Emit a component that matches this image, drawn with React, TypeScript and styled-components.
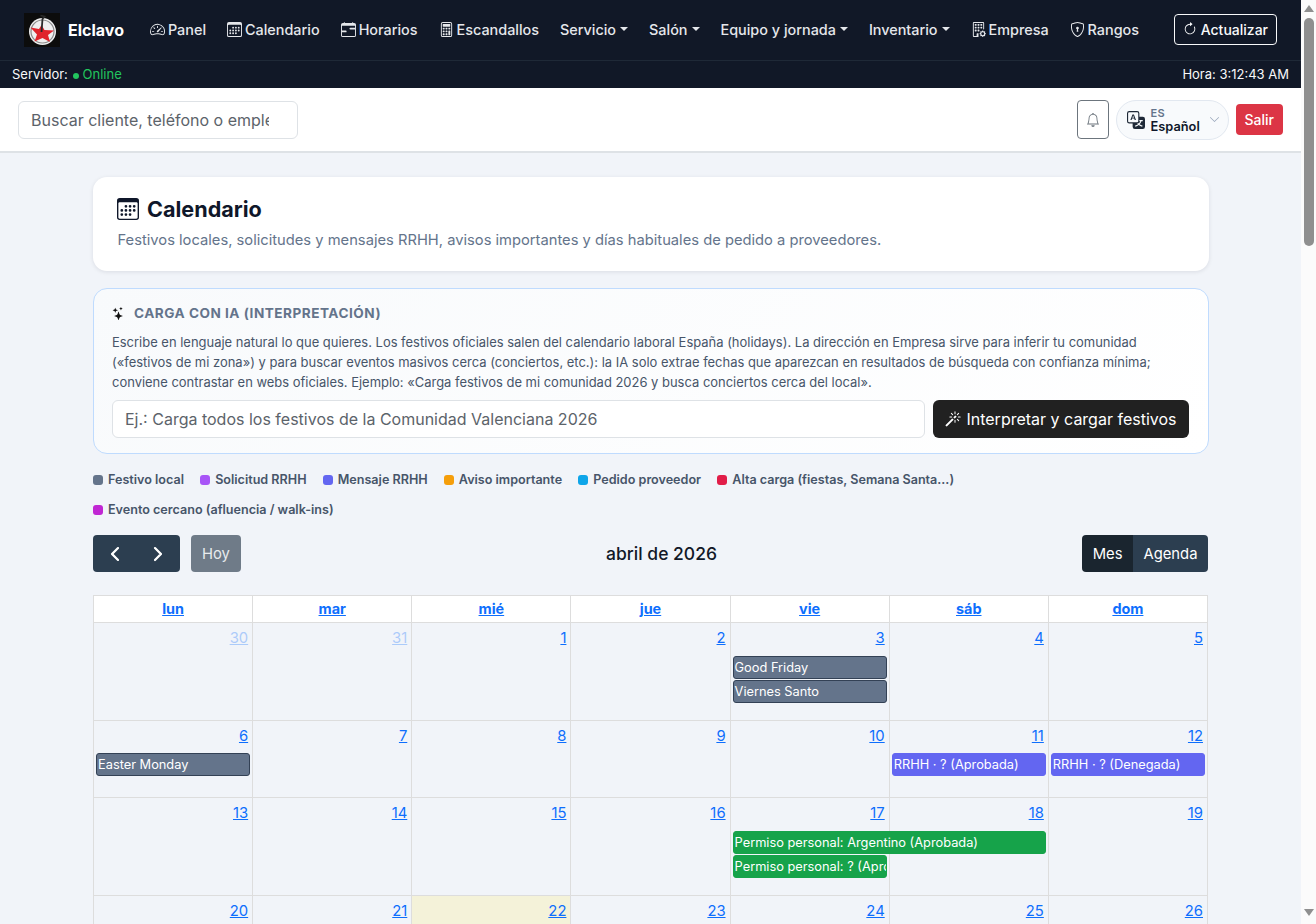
import styled, { createGlobalStyle } from 'styled-components';
import {
  BsArrowClockwise,
  BsBell,
  BsBuildingGear,
  BsCalculator,
  BsCalendar3,
  BsCalendarRange,
  BsChevronDown,
  BsChevronLeft,
  BsChevronRight,
  BsMagic,
  BsShieldLock,
  BsSpeedometer2,
  BsStars,
  BsTranslate,
} from 'react-icons/bs';

const GlobalStyle = createGlobalStyle`
  * { box-sizing: border-box; }
  html, body { margin: 0; padding: 0; }
  body {
    font-family: Inter, "Liberation Sans", sans-serif;
    background: #f1f4f9;
    color: #0f172a;
  }
`;

const Page = styled.div`
  width: 1301px;
`;

const ScrollRail = styled.div`
  position: fixed;
  top: 0;
  right: 0;
  bottom: 0;
  width: 15px;
  background: #fbfbfb;
  display: flex;
  flex-direction: column;
  align-items: center;
  justify-content: space-between;
  padding: 5px 0 8px;
`;

const ScrollTop = styled.div`
  display: flex;
  flex-direction: column;
  align-items: center;
  gap: 6px;
`;

const ScrollArrow = styled.span<{ $down?: boolean }>`
  width: 0;
  height: 0;
  border-left: 5px solid transparent;
  border-right: 5px solid transparent;
  border-bottom: ${(p) => (p.$down ? '0' : '7px solid #8f8f8f')};
  border-top: ${(p) => (p.$down ? '7px solid #8f8f8f' : '0')};
`;

const ScrollThumb = styled.div`
  width: 10px;
  height: 228px;
  border-radius: 5px;
  background: #8f8f8f;
`;

const Navbar = styled.nav`
  background: #111827;
  height: 61px;
  display: flex;
  align-items: center;
  padding: 0 24px;
  border-bottom: 1px solid #1f2937;
`;

const Brand = styled.a`
  display: flex;
  align-items: center;
  gap: 8px;
  color: #fff;
  font-size: 16px;
  font-weight: 700;
  text-decoration: none;
  margin-right: 26px;
`;

const NavLinks = styled.div`
  display: flex;
  align-items: center;
  gap: 21px;
  flex: 1;
  margin-bottom: 2px;
`;

const NavLink = styled.a`
  display: flex;
  align-items: center;
  gap: 3px;
  color: #e5e7eb;
  font-size: 14.4px;
  font-weight: 500;
  text-decoration: none;
  white-space: nowrap;
  svg { font-size: 15px; }
`;

const Caret = styled.span`
  width: 0;
  height: 0;
  margin-left: 1px;
  border-top: 4px solid #e5e7eb;
  border-left: 4px solid transparent;
  border-right: 4px solid transparent;
`;

const RefreshButton = styled.button`
  display: flex;
  align-items: center;
  gap: 4px;
  height: 31px;
  padding: 0 8px;
  margin-bottom: 2px;
  background: transparent;
  color: #f8f9fa;
  border: 1px solid #f8f9fa;
  border-radius: 4px;
  font: 500 14px Inter, sans-serif;
`;

const StatusBar = styled.div`
  height: 27px;
  padding: 0 12px 2px;
  background: #111827;
  color: #f8f9fa;
  display: flex;
  align-items: center;
  justify-content: space-between;
  font-size: 13px;
`;

const StatusOnline = styled.span`
  color: #22c55e;
`;

const StatusDot = styled.span`
  display: inline-block;
  width: 6px;
  height: 6px;
  margin: 0 4px 0 1px;
  border-radius: 50%;
  background: #22c55e;
`;

const SearchBar = styled.div`
  height: 65px;
  background: #fff;
  border-bottom: 2px solid #dee2e6;
  display: flex;
  align-items: center;
  justify-content: space-between;
  padding: 0 18px;
`;

const SearchInput = styled.input`
  width: 280px;
  height: 38px;
  padding: 0 28px 0 12px;
  border: 1px solid #dee2e6;
  border-radius: 6px;
  font: 400 16px Inter, sans-serif;
  &::placeholder { color: #5c636a; opacity: 1; }
`;

const SearchActions = styled.div`
  display: flex;
  align-items: center;
  gap: 7px;
`;

const BellButton = styled.button`
  width: 32px;
  height: 39px;
  padding: 0;
  background: #fff;
  border: 1px solid #6c757d;
  border-radius: 4px;
  color: #6c757d;
  display: flex;
  align-items: center;
  justify-content: center;
  font-size: 14px;
`;

const LanguagePill = styled.div`
  width: 113px;
  height: 40px;
  display: flex;
  align-items: center;
  padding: 0 8px 0 10px;
  gap: 6px;
  border: 1px solid #e2e8f0;
  border-radius: 20px;
  background: #f8fafc;
  color: #1f2937;
`;

const LanguageText = styled.div`
  display: flex;
  flex-direction: column;
  flex: 1;
  line-height: 13px;
`;

const LanguageCode = styled.span`
  font-size: 11px;
  font-weight: 600;
  letter-spacing: 0.4px;
  color: #64748b;
`;

const LanguageName = styled.span`
  font-size: 12.8px;
  font-weight: 600;
  color: #0f172a;
`;

const LogoutButton = styled.button`
  height: 31px;
  padding: 0 9px;
  border: 0;
  border-radius: 4px;
  background: #dc3545;
  color: #fff;
  font: 500 14px Inter, sans-serif;
`;

const Main = styled.main`
  width: 1116px;
  margin: 0 92px 0 93px;
  padding-top: 24px;
`;

const HeaderCard = styled.section`
  height: 94px;
  padding: 19px 24px 0;
  background: #fff;
  border-radius: 14px;
  box-shadow: 0 1px 4px rgba(15, 23, 42, 0.1);
`;

const Title = styled.h1`
  display: flex;
  align-items: center;
  gap: 8px;
  margin: 0 0 8px;
  font-size: 21.6px;
  line-height: 26px;
  font-weight: 700;
  color: #0f172a;
  svg { font-size: 22px; }
`;

const Subtitle = styled.p`
  margin: 0;
  padding-left: 0.5px;
  font-size: 14.72px;
  line-height: 21px;
  color: #64748b;
`;

const AiPanel = styled.section`
  height: 166px;
  margin-top: 17px;
  padding: 15px 19px 0 18px;
  border: 1px solid #bfdbfe;
  border-radius: 14px;
  background: linear-gradient(135deg, #f8fafc 0%, #ffffff 100%);
`;

const AiHeading = styled.h2`
  display: flex;
  align-items: center;
  gap: 9px;
  margin: 0 0 10px;
  font-size: 13.6px;
  line-height: 18px;
  font-weight: 700;
  letter-spacing: 0.5px;
  color: #64748b;
  svg { color: #111; font-size: 13px; }
`;

const AiText = styled.p`
  margin: 0 0 8px;
  font-size: 12.96px;
  line-height: 20px;
  color: #475569;
`;

const AiForm = styled.div`
  display: flex;
  gap: 8px;
`;

const AiInput = styled.input`
  flex: 1;
  height: 38px;
  padding: 0 12px;
  border: 1px solid #dee2e6;
  border-radius: 6px;
  font: 400 16px Inter, sans-serif;
  &::placeholder { color: #5c636a; opacity: 1; }
`;

const AiButton = styled.button`
  display: flex;
  align-items: center;
  gap: 5px;
  height: 38px;
  padding: 0 12.5px;
  border: 0;
  border-radius: 6px;
  background: #212121;
  color: #fff;
  font: 400 16px Inter, sans-serif;
`;

const Legend = styled.div`
  display: flex;
  flex-wrap: wrap;
  column-gap: 16.2px;
  row-gap: 12px;
  margin-top: 17px;
  padding-right: 8px;
`;

const LegendItem = styled.span`
  display: flex;
  align-items: center;
  gap: 5px;
  font-size: 12.58px;
  line-height: 18px;
  font-weight: 600;
  color: #475569;
`;

const LegendDot = styled.span<{ $color: string }>`
  width: 10px;
  height: 10px;
  border-radius: 3px;
  background: ${(p) => p.$color};
`;

const Toolbar = styled.div`
  display: flex;
  justify-content: space-between;
  align-items: center;
  height: 37px;
  margin: 16px 1px 23px 0;
`;

const ToolbarLeft = styled.div`
  display: flex;
  gap: 11px;
`;

const ToolbarTitle = styled.h2`
  margin: 0;
  font-size: 17.5px;
  font-weight: 500;
  color: #111827;
`;

const ButtonGroup = styled.div`
  display: flex;
  border-radius: 4px;
  overflow: hidden;
`;

const ToolButton = styled.button<{ $active?: boolean }>`
  height: 37px;
  padding: 0 10.5px;
  border: 0;
  background: ${(p) => (p.$active ? '#1a252f' : '#2c3e50')};
  color: #fff;
  font: 400 14.8px Inter, sans-serif;
  display: flex;
  align-items: center;
  justify-content: center;
`;

const ArrowButton = styled(ToolButton)`
  width: 43.5px;
  padding: 0;
  font-size: 16px;
  svg { stroke: currentColor; stroke-width: 1.2; }
`;

const TodayButton = styled.button`
  height: 37px;
  padding: 0 11px;
  border: 0;
  border-radius: 4px;
  background: #6f7b88;
  color: #e8ebee;
  font: 400 14.8px Inter, sans-serif;
`;

const Calendar = styled.div`
  margin-right: 1px;
  border-top: 1px solid #dddddd;
  border-left: 1px solid #dddddd;
`;

const HeaderRow = styled.div`
  display: grid;
  grid-template-columns: repeat(7, 1fr);
`;

const HeaderCell = styled.div`
  height: 27px;
  padding-bottom: 1px;
  background: #fff;
  border-right: 1px solid #ddd;
  border-bottom: 1px solid #ddd;
  display: flex;
  align-items: center;
  justify-content: center;
`;

const HeaderLink = styled.a`
  color: #0d6efd;
  font-size: 14.4px;
  font-weight: 700;
  text-decoration: underline;
`;

const Week = styled.div<{ $rows: string }>`
  display: grid;
  grid-template-columns: repeat(7, 1fr);
  grid-template-rows: ${(p) => p.$rows};
`;

const DayCell = styled.div<{ $col: number; $today?: boolean }>`
  grid-column: ${(p) => p.$col};
  grid-row: 1 / -1;
  padding: 4px 4px 0 0;
  text-align: right;
  border-right: 1px solid #ddd;
  border-bottom: 1px solid #ddd;
  background: ${(p) => (p.$today ? '#f4f2d9' : 'transparent')};
`;

const DayLink = styled.a<{ $muted?: boolean }>`
  color: #0d6efd;
  opacity: ${(p) => (p.$muted ? 0.3 : 1)};
  font-size: 14.8px;
  line-height: 22px;
  text-decoration: underline;
`;

const EventBar = styled.div<{ $col: number; $span?: number; $row: number; $color: string; $border: string }>`
  grid-column: ${(p) => p.$col} / span ${(p) => p.$span ?? 1};
  grid-row: ${(p) => p.$row};
  margin: 0 3px 1px 2px;
  height: 23px;
  padding: 0 1px;
  background: ${(p) => p.$color};
  border: 1px solid ${(p) => p.$border};
  border-radius: 3px;
  color: #fff;
  font-size: 12.8px;
  font-weight: 400;
  line-height: 21px;
  white-space: nowrap;
  overflow: hidden;
`;

const legend = [
  ['Festivo local', '#64748b'],
  ['Solicitud RRHH', '#a855f7'],
  ['Mensaje RRHH', '#6366f1'],
  ['Aviso importante', '#f59e0b'],
  ['Pedido proveedor', '#0ea5e9'],
  ['Alta carga (fiestas, Semana Santa...)', '#e11d48'],
  ['Evento cercano (afluencia / walk-ins)', '#c026d3'],
];

const dayNames = ['lun', 'mar', 'mié', 'jue', 'vie', 'sáb', 'dom'];

const GRAY: [string, string] = ['#64748b', '#334155'];
const PURPLE: [string, string] = ['#6366f1', '#6366f1'];
const GREEN: [string, string] = ['#16a34a', '#16a34a'];

type CalEvent = { title: string; col: number; span?: number; row: number; tone: [string, string] };

type WeekData = { rows: string; first: number; muted?: number; events: CalEvent[] };

const weeks: WeekData[] = [
  {
    rows: '33px 24px 24px 17px',
    first: 30,
    muted: 2,
    events: [
      { title: 'Good Friday', col: 5, row: 2, tone: GRAY },
      { title: 'Viernes Santo', col: 5, row: 3, tone: GRAY },
    ],
  },
  {
    rows: '32px 24px 21px',
    first: 6,
    events: [
      { title: 'Easter Monday', col: 1, row: 2, tone: GRAY },
      { title: 'RRHH · ? (Aprobada)', col: 6, row: 2, tone: PURPLE },
      { title: 'RRHH · ? (Denegada)', col: 7, row: 2, tone: PURPLE },
    ],
  },
  {
    rows: '33px 24px 24px 17px',
    first: 13,
    events: [
      { title: 'Permiso personal: Argentino (Aprobada)', col: 5, span: 2, row: 2, tone: GREEN },
      { title: 'Permiso personal: ? (Aprobada)', col: 5, row: 3, tone: GREEN },
    ],
  },
  { rows: '98px', first: 20, events: [] },
];

function dayNumber(week: WeekData, index: number) {
  if (week.muted && index < week.muted) return week.first + index;
  if (week.muted) return index - week.muted + 1;
  return week.first + index;
}

function App(): JSX.Element {
  return (
    <Page>
      <GlobalStyle />
      <Navbar>
        <Brand href="#">
          <svg width="36" height="34" viewBox="0 0 36 34">
            <rect width="36" height="34" fill="#0c0c0c" />
            <circle cx="18.5" cy="18.5" r="13.5" fill="#efefef" />
            <circle cx="18.5" cy="18.5" r="11.5" fill="none" stroke="#8a8a8a" strokeWidth="1.2" />
            <path
              d="M17.5 12 L20.5 17 L30 17.5 L24 22 L26 29 L18.5 25 L10.5 28.5 L13 21.5 L6.5 14.5 L15 16 Z"
              fill="#e0242c"
            />
            <path d="M16.5 2.5 L20.5 3.5 L18.5 6 L17.5 19" stroke="#2a2a2a" strokeWidth="1.8" fill="none" />
          </svg>
          Elclavo
        </Brand>
        <NavLinks>
          <NavLink href="#"><BsSpeedometer2 />Panel</NavLink>
          <NavLink href="#"><BsCalendar3 />Calendario</NavLink>
          <NavLink href="#"><BsCalendarRange />Horarios</NavLink>
          <NavLink href="#"><BsCalculator />Escandallos</NavLink>
          <NavLink href="#">Servicio<Caret /></NavLink>
          <NavLink href="#">Salón<Caret /></NavLink>
          <NavLink href="#">Equipo y jornada<Caret /></NavLink>
          <NavLink href="#">Inventario<Caret /></NavLink>
          <NavLink href="#"><BsBuildingGear />Empresa</NavLink>
          <NavLink href="#"><BsShieldLock />Rangos</NavLink>
        </NavLinks>
        <RefreshButton><BsArrowClockwise />Actualizar</RefreshButton>
      </Navbar>
      <StatusBar>
        <span>
          Servidor: <StatusDot /><StatusOnline>Online</StatusOnline>
        </span>
        <span>Hora: 3:12:43 AM</span>
      </StatusBar>
      <SearchBar>
        <SearchInput placeholder="Buscar cliente, teléfono o empleado..." />
        <SearchActions>
          <BellButton><BsBell /></BellButton>
          <LanguagePill>
            <BsTranslate size={18} />
            <LanguageText>
              <LanguageCode>ES</LanguageCode>
              <LanguageName>Español</LanguageName>
            </LanguageText>
            <BsChevronDown size={11} color="#94a3b8" />
          </LanguagePill>
          <LogoutButton>Salir</LogoutButton>
        </SearchActions>
      </SearchBar>
      <Main>
        <HeaderCard>
          <Title><BsCalendar3 />Calendario</Title>
          <Subtitle>
            Festivos locales, solicitudes y mensajes RRHH, avisos importantes y días habituales de pedido a proveedores.
          </Subtitle>
        </HeaderCard>
        <AiPanel>
          <AiHeading><BsStars />CARGA CON IA (INTERPRETACIÓN)</AiHeading>
          <AiText>
            Escribe en lenguaje natural lo que quieres. Los festivos oficiales salen del calendario laboral España (holidays). La dirección en Empresa sirve para inferir tu comunidad («festivos de mi zona») y para buscar eventos masivos cerca (conciertos, etc.): la IA solo extrae fechas que aparezcan en resultados de búsqueda con confianza mínima; conviene contrastar en webs oficiales. Ejemplo: «Carga festivos de mi comunidad 2026 y busca conciertos cerca del local».
          </AiText>
          <AiForm>
            <AiInput placeholder="Ej.: Carga todos los festivos de la Comunidad Valenciana 2026" />
            <AiButton><BsMagic />Interpretar y cargar festivos</AiButton>
          </AiForm>
        </AiPanel>
        <Legend>
          {legend.map(([label, color]) => (
            <LegendItem key={label}>
              <LegendDot $color={color} />
              {label}
            </LegendItem>
          ))}
        </Legend>
        <Toolbar>
          <ToolbarLeft>
            <ButtonGroup>
              <ArrowButton><BsChevronLeft /></ArrowButton>
              <ArrowButton><BsChevronRight /></ArrowButton>
            </ButtonGroup>
            <TodayButton>Hoy</TodayButton>
          </ToolbarLeft>
          <ToolbarTitle>abril de 2026</ToolbarTitle>
          <ButtonGroup>
            <ToolButton $active>Mes</ToolButton>
            <ToolButton>Agenda</ToolButton>
          </ButtonGroup>
        </Toolbar>
        <Calendar>
          <HeaderRow>
            {dayNames.map((d) => (
              <HeaderCell key={d}><HeaderLink href="#">{d}</HeaderLink></HeaderCell>
            ))}
          </HeaderRow>
          {weeks.map((week) => (
            <Week key={week.first} $rows={week.rows}>
              {dayNames.map((d, i) => {
                const n = dayNumber(week, i);
                return (
                  <DayCell key={d} $col={i + 1} $today={n === 22 && !week.muted}>
                    <DayLink href="#" $muted={!!week.muted && i < week.muted}>{n}</DayLink>
                  </DayCell>
                );
              })}
              {week.events.map((ev) => (
                <EventBar
                  key={ev.title}
                  $col={ev.col}
                  $span={ev.span}
                  $row={ev.row}
                  $color={ev.tone[0]}
                  $border={ev.tone[1]}
                >
                  {ev.title}
                </EventBar>
              ))}
            </Week>
          ))}
        </Calendar>
      </Main>
      <ScrollRail>
        <ScrollTop>
          <ScrollArrow />
          <ScrollThumb />
        </ScrollTop>
        <ScrollArrow $down />
      </ScrollRail>
    </Page>
  );
}

export default App;
